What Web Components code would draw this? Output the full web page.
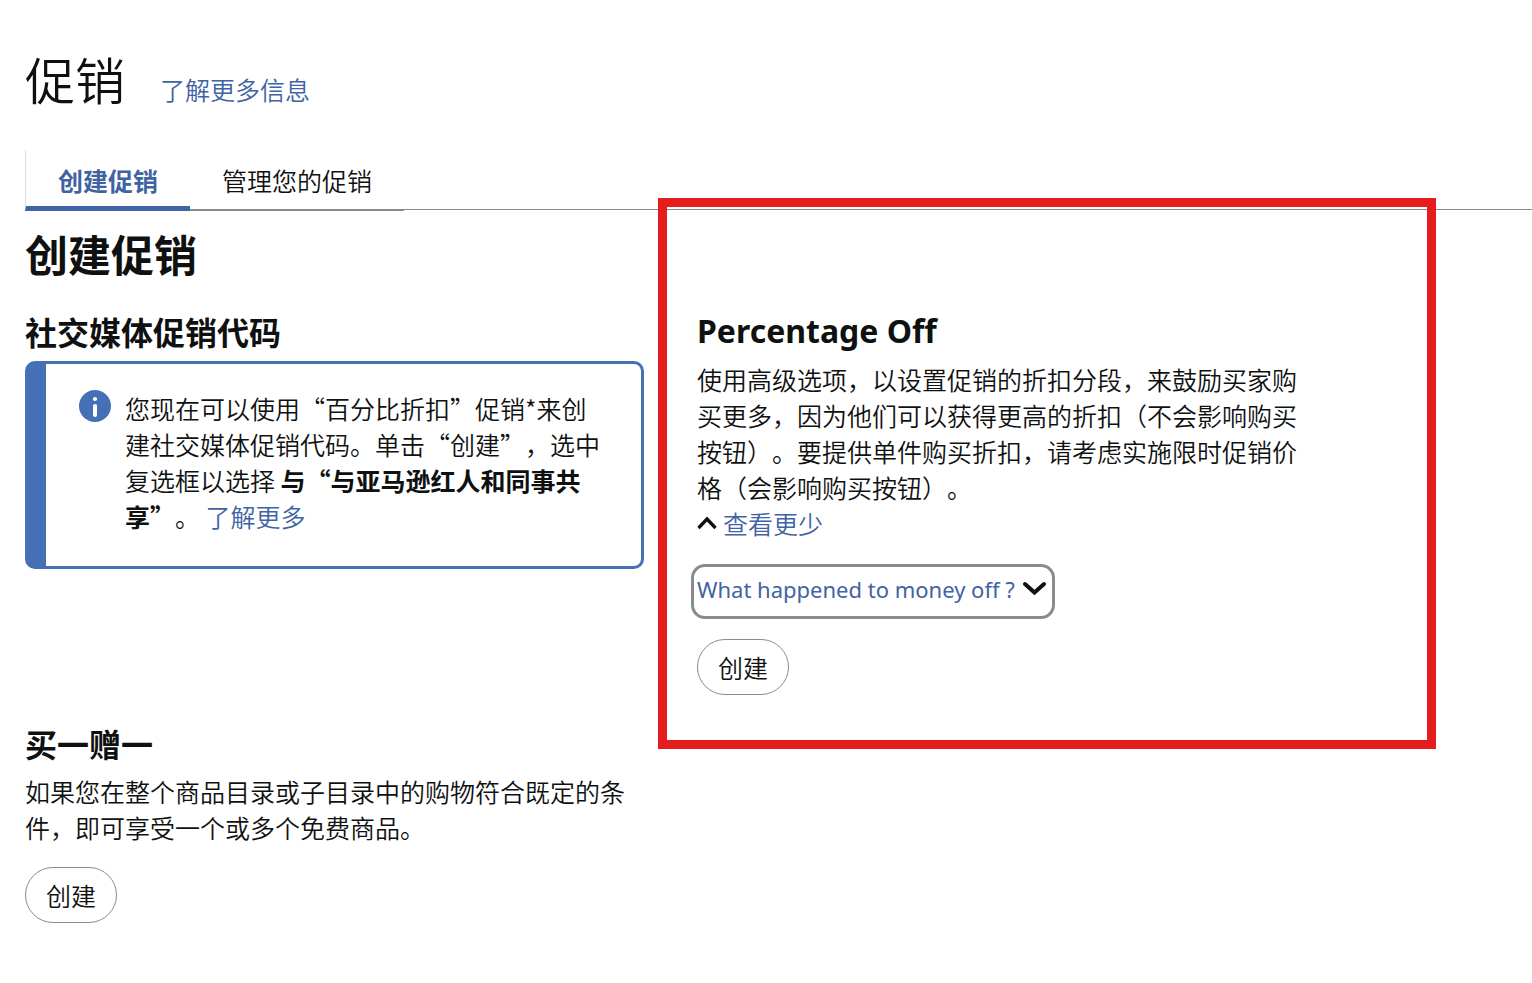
<!DOCTYPE html>
<html lang="zh-CN">
<head>
<meta charset="utf-8">
<meta name="viewport" content="width=device-width, initial-scale=1">
<title>促销</title>
<style>
  body {
    margin: 0;
    background: #fff;
    color: #0f1111;
    font: 350 25px/36px "Noto Sans CJK SC", "Noto Sans", sans-serif;
    text-spacing-trim: space-all;
  }
</style>
</head>
<body>
<promo-page></promo-page>

<script>
  const define = (name, html) => customElements.define(name, class extends HTMLElement {
    constructor() {
      super();
      this.attachShadow({ mode: 'open' }).innerHTML = html;
    }
  });

  define('text-link', `
    <style>
      :host { display: inline; }
      a { color: #3f63a3; text-decoration: none; }
      a:hover { text-decoration: underline; }
    </style>
    <a href="#"><slot></slot></a>`);

  define('page-header', `
    <style>
      :host { display: flex; align-items: baseline; gap: 35px; padding: 41px 25px 35px; }
      h1 { margin: 0; font-size: 50px; line-height: 74px; font-weight: 350; }
    </style>
    <h1><slot></slot></h1>
    <slot name="link"></slot>`);

  define('tab-bar', `
    <style>
      :host {
        display: flex;
        margin-left: 25px;
        background: linear-gradient(#888c8c, #888c8c) 0 59px / 100% 1px no-repeat;
      }
    </style>
    <slot></slot>`);

  define('tab-item', `
    <style>
      :host { display: block; }
      button {
        box-sizing: border-box;
        height: 61px;
        padding: 0 32px;
        border: 0;
        border-bottom: 2px solid #888c8c;
        background: none;
        color: inherit;
        font: inherit;
        cursor: pointer;
      }
      :host([selected]) button {
        padding-top: 3px;
        border-left: 1px solid #ddd;
        border-bottom: 5px solid #3f63a3;
        color: #3f63a3;
        font-weight: 700;
      }
    </style>
    <button type="button"><slot></slot></button>`);

  define('create-button', `
    <style>
      :host { display: block; margin-top: 22px; }
      button {
        box-sizing: border-box;
        display: block;
        height: 56px;
        padding: 0 20px;
        border: 1px solid #888c8c;
        border-radius: 28px;
        background: #fff;
        color: inherit;
        font: inherit;
        cursor: pointer;
      }
    </style>
    <button type="button"><slot>创建</slot></button>`);

  define('info-alert', `
    <style>
      :host {
        display: flex;
        gap: 14px;
        margin-top: 7px;
        padding: 26px 33px 32px;
        border: 3px solid #4570b5;
        border-left-width: 21px;
        border-radius: 10px;
      }
      svg { flex: none; width: 32px; height: 32px; }
      div { flex: 1; min-width: 0; }
    </style>
    <svg viewBox="0 0 32 32" aria-hidden="true">
      <circle cx="16" cy="16" r="16" fill="#4570b5"/>
      <circle cx="16" cy="9" r="2.1" fill="#fff"/>
      <path d="M16 16v9" stroke="#fff" stroke-width="4" stroke-linecap="round"/>
    </svg>
    <div><slot></slot></div>`);

  define('promo-card', `
    <style>
      :host { display: block; position: relative; min-width: 0; }
      h3 { display: flex; margin: 0; font-size: 32px; line-height: 46px; font-weight: 700; }
    </style>
    <h3><slot name="title"></slot></h3>
    <slot></slot>`);

  define('card-text', `
    <style>
      :host { display: block; }
      p { margin: 7px 0 0; }
    </style>
    <p><slot></slot></p>`);

  define('less-toggle', `
    <style>
      :host { display: flex; align-items: center; gap: 6px; }
      svg { width: 20px; height: 14px; }
    </style>
    <svg viewBox="0 0 20 14" aria-hidden="true">
      <path d="M1.500 12 10 3l8.500 9" fill="none" stroke="#0f1111" stroke-width="3.300"/>
    </svg>
    <text-link><slot></slot></text-link>`);

  define('faq-expander', `
    <style>
      :host { display: block; margin: 23px 0 0 -6px; }
      button {
        box-sizing: border-box;
        display: flex;
        align-items: center;
        gap: 8px;
        height: 55px;
        padding: 0 6px 6px 3px;
        border: 3px solid #888c8c;
        border-radius: 14px;
        background: #fff;
        color: #3f63a3;
        font: 22px/36px "Noto Sans", "Open Sans", sans-serif;
        white-space: nowrap;
        cursor: pointer;
      }
      svg { width: 23px; height: 16px; }
    </style>
    <button type="button" aria-expanded="false">
      <slot></slot>
      <svg viewBox="0 0 23 16" aria-hidden="true">
        <path d="M2 3l9.500 8.500L21 3" fill="none" stroke="#0f1111" stroke-width="4" stroke-linecap="round"/>
      </svg>
    </button>`);

  /* Red marker drawn around the card that holds it, reaching past its edges. */
  define('highlight-frame', `
    <style>
      :host {
        position: absolute;
        inset: -110px -120px -54px -39px;
        border: 9px solid #e71c1c;
        pointer-events: none;
      }
    </style>`);

  define('promo-page', `
    <style>
      :host { display: block; overflow-x: clip; padding-bottom: 60px; }
      main { padding: 0 25px; }
      h2 { margin: 12px 0 25px; font-size: 43px; line-height: 60px; font-weight: 700; }
      .cards {
        display: grid;
        grid-template-columns: repeat(2, minmax(0, 619px));
        gap: 25px 53px;
      }
      .latin { font-family: "Noto Sans", "Open Sans", sans-serif; }
      faq-expander + create-button { margin-top: 20px; }
    </style>
    <page-header>促销<text-link slot="link">了解更多信息</text-link></page-header>
    <tab-bar>
      <tab-item selected>创建促销</tab-item>
      <tab-item>管理您的促销</tab-item>
    </tab-bar>
    <main>
      <h2>创建促销</h2>
      <div class="cards">
        <promo-card>
          <span slot="title">社交媒体促销代码</span>
          <info-alert>您现在可以使用“百分比折扣”促销*来创建社交媒体促销代码。单击“创建”，选中复选框以选择 <b>与“与亚马逊红人和同事共享”</b>。 <text-link>了解更多</text-link></info-alert>
        </promo-card>
        <promo-card>
          <span slot="title" class="latin">Percentage Off</span>
          <card-text>使用高级选项，以设置促销的折扣分段，来鼓励买家购买更多，因为他们可以获得更高的折扣（不会影响购买按钮）。要提供单件购买折扣，请考虑实施限时促销价格（会影响购买按钮）。</card-text>
          <less-toggle>查看更少</less-toggle>
          <faq-expander>What happened to money off ?</faq-expander>
          <create-button></create-button>
          <highlight-frame></highlight-frame>
        </promo-card>
        <promo-card>
          <span slot="title">买一赠一</span>
          <card-text>如果您在整个商品目录或子目录中的购物符合既定的条件，即可享受一个或多个免费商品。</card-text>
          <create-button></create-button>
        </promo-card>
      </div>
    </main>`);
</script>
</body>
</html>
